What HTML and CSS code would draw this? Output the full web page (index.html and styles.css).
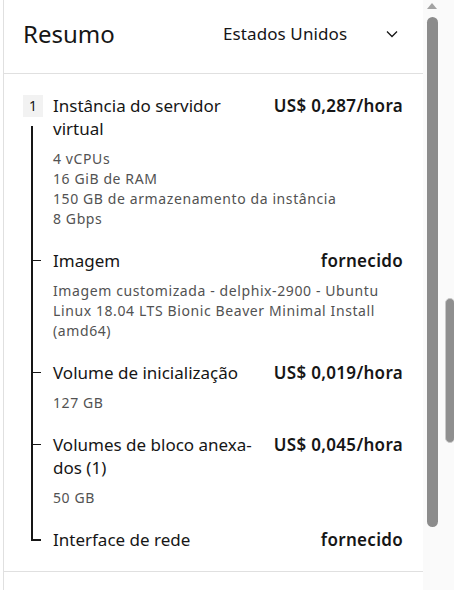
FILE: index.html
```html
<!DOCTYPE html>
<html lang="pt">
<head>
<meta charset="utf-8">
<title>Resumo</title>
<link rel="stylesheet" href="styles.css">
</head>
<body>
<div class="page">
  <section class="panel">
    <header class="panel-header">
      <h2 class="panel-title">Resumo</h2>
      <div class="dropdown">
        <span class="dropdown-label">Estados Unidos</span>
        <svg class="chevron" width="12" height="8" viewBox="0 0 12 8"><path d="M1 1.5 L6 6.5 L11 1.5" fill="none" stroke="#161616" stroke-width="1.3"/></svg>
      </div>
    </header>
    <div class="steps">
      <div class="step step-first">
        <div class="rail"><span class="badge">1</span></div>
        <div class="step-title">Instância do servidor virtual</div>
        <div class="step-price">US$ 0,287/hora</div>
        <div class="step-detail">4 vCPUs<br>16 GiB de RAM<br>150 GB de armazenamento da instância<br>8 Gbps</div>
      </div>
      <div class="step">
        <div class="rail"></div>
        <div class="step-title">Imagem</div>
        <div class="step-price">fornecido</div>
        <div class="step-detail">Imagem customizada - delphix-2900 - Ubuntu Linux 18.04 LTS Bionic Beaver Minimal Install (amd64)</div>
      </div>
      <div class="step">
        <div class="rail"></div>
        <div class="step-title">Volume de inicialização</div>
        <div class="step-price">US$ 0,019/hora</div>
        <div class="step-detail">127 GB</div>
      </div>
      <div class="step">
        <div class="rail"></div>
        <div class="step-title">Volumes de bloco anexa-<br>dos (1)</div>
        <div class="step-price">US$ 0,045/hora</div>
        <div class="step-detail">50 GB</div>
      </div>
      <div class="step step-last">
        <div class="rail"></div>
        <div class="step-title">Interface de rede</div>
        <div class="step-price">fornecido</div>
      </div>
    </div>
  </section>
  <div class="gutter"></div>
  <div class="scroll-arrow"></div>
  <div class="scroll-thumb"></div>
  <div class="scroll-thumb-outer"></div>
</div>
</body>
</html>
```

FILE: styles.css
```css
* { box-sizing: border-box; }
html, body { margin: 0; padding: 0; }
body {
  background: #ffffff;
  font-family: "Noto Sans", "Open Sans", sans-serif;
  color: #161616;
  overflow: hidden;
}
.page {
  position: relative;
  display: flex;
  width: 454px;
  height: 590px;
  padding-left: 3px;
}
.panel {
  width: 420px;
  border-left: 1px solid #e0e0e0;
  background: #ffffff;
}
.gutter {
  flex: 1;
  background: #fafafa;
}
.panel-header {
  height: 74px;
  border-bottom: 1px solid #e0e0e0;
  display: flex;
  align-items: center;
  padding: 0 25px 6px 19px;
}
.panel-title {
  margin: 0;
  font-size: 24px;
  font-weight: 400;
  line-height: 30px;
}
.dropdown {
  margin-left: auto;
  width: 175px;
  display: flex;
  align-items: center;
  justify-content: space-between;
}
.dropdown-label {
  font-size: 17px;
  line-height: 22px;
  letter-spacing: 0.1px;
}
.chevron { display: block; }
.steps {
  padding: 20px 20px 20px 19px;
  border-bottom: 1px solid #e0e0e0;
}
.step {
  display: grid;
  grid-template-columns: 30px 1fr auto;
  padding-bottom: 20px;
}
.step-last { padding-bottom: 0; }
.rail {
  grid-column: 1;
  grid-row: 1 / span 2;
  position: relative;
}
.rail::before {
  content: "";
  position: absolute;
  left: 8px;
  top: 0;
  bottom: -20px;
  width: 2px;
  background: #161616;
}
.rail::after {
  content: "";
  position: absolute;
  left: 8px;
  top: 11px;
  width: 10px;
  height: 1px;
  background: #161616;
}
.step-first .rail::before { top: 32px; }
.step-first .rail::after { display: none; }
.step-last .rail::before { bottom: auto; height: 13px; }
.step-last .rail::after { top: 11px; height: 2px; }
.badge {
  display: block;
  width: 20px;
  height: 22px;
  background: #f2f2f2;
  font-size: 14px;
  line-height: 22px;
  text-align: center;
  margin-top: 1px;
}
.step-title {
  grid-column: 2;
  grid-row: 1;
  font-size: 17px;
  line-height: 23px;
  padding-right: 12px;
}
.step-price {
  grid-column: 3;
  grid-row: 1;
  font-size: 17px;
  font-weight: 600;
  line-height: 23px;
  letter-spacing: 0.3px;
  text-align: right;
}
.step-detail {
  grid-column: 2 / span 2;
  grid-row: 2;
  margin-top: 9px;
  font-size: 14px;
  line-height: 20px;
  color: #525252;
  letter-spacing: 0.6px;
}
.scroll-arrow {
  position: absolute;
  left: 427px;
  top: 3px;
  width: 0;
  height: 0;
  border-left: 5px solid transparent;
  border-right: 5px solid transparent;
  border-bottom: 6px solid #a3a3a3;
}
.scroll-thumb {
  position: absolute;
  left: 427px;
  top: 17px;
  width: 11px;
  height: 510px;
  border-radius: 6px;
  background: #8c8c8c;
}
.scroll-thumb-outer {
  position: absolute;
  left: 445px;
  top: 298px;
  width: 10px;
  height: 145px;
  border-radius: 5px;
  background: #8f8f8f;
  border: 1px solid #c8c8c8;
}
```
